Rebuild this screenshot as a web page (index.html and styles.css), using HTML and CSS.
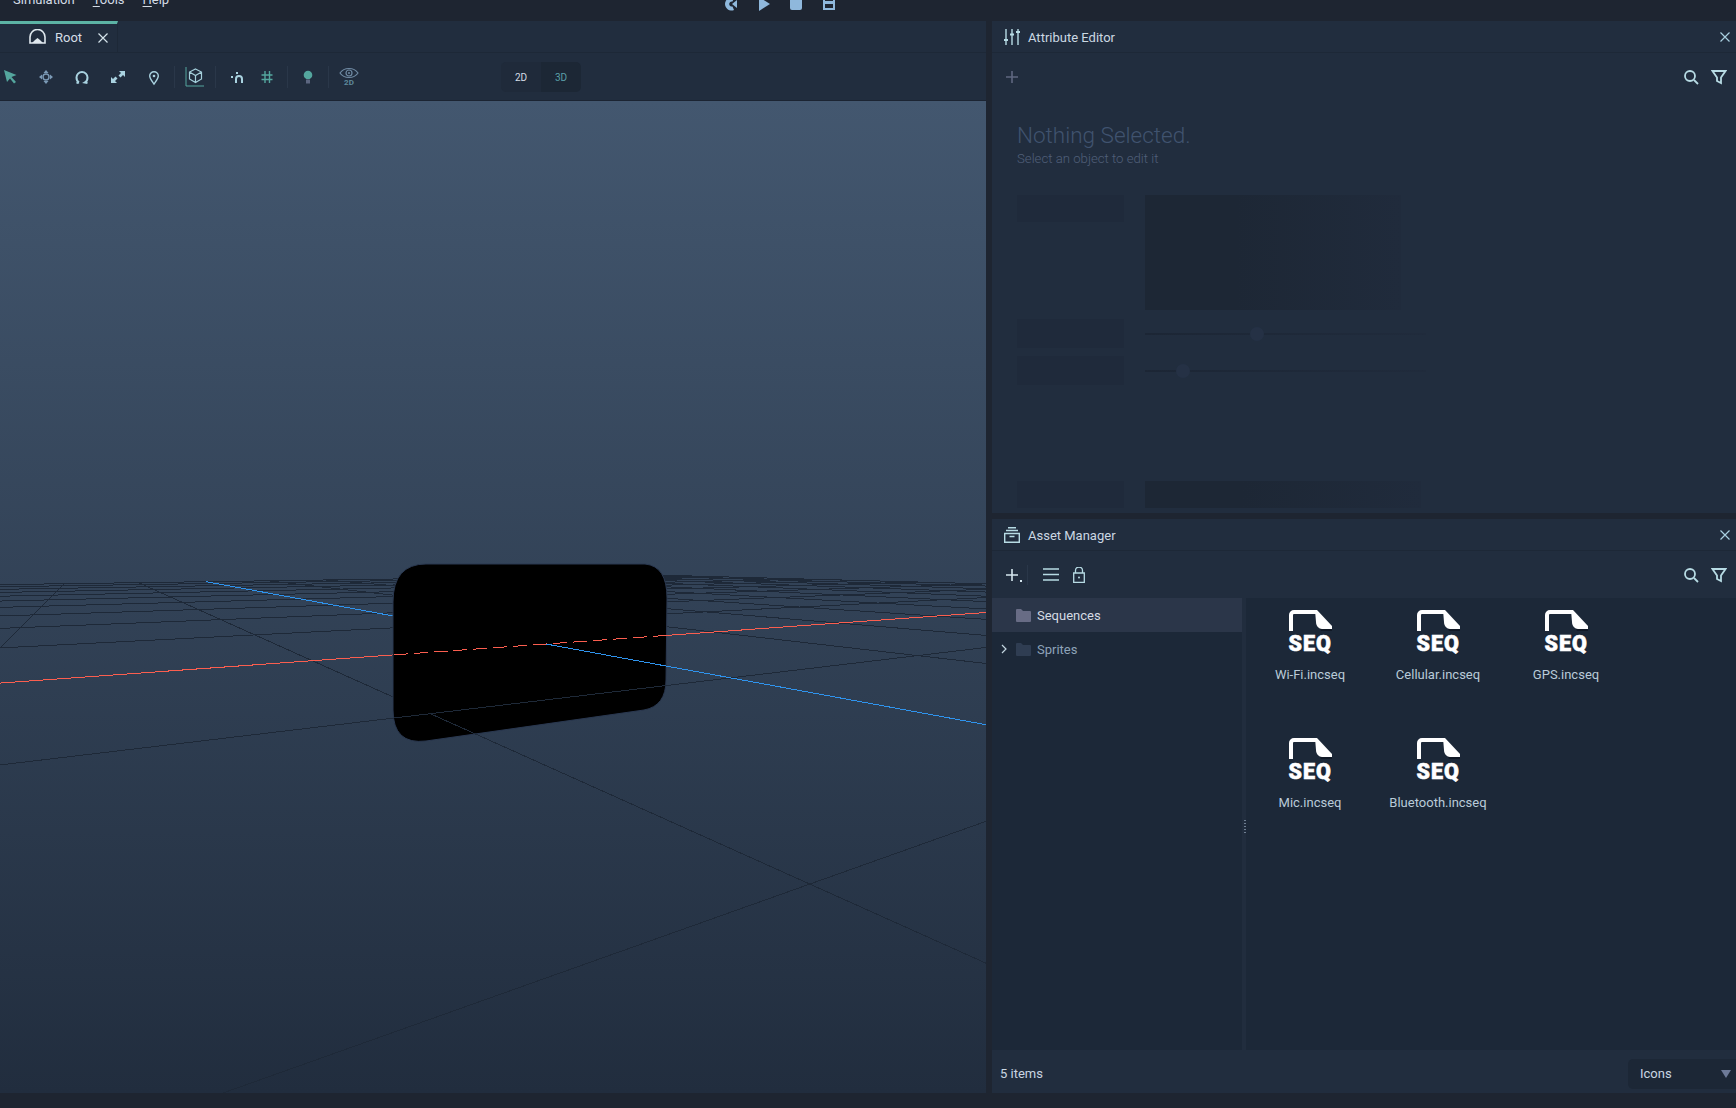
FILE: index.html
```html
<!DOCTYPE html>
<html lang="en">
<head>
    <meta charset="UTF-8">
    <title>Root</title>
    <link rel="stylesheet" href="styles.css">
</head>
<body>

    <!-- Menu bar, cut off by the top of the window -->
    <div class="topbar">
        <div class="menu">
            <span>Simulation</span>
            <span><u>T</u>ools</span>
            <span><u>H</u>elp</span>
        </div>
        <div class="transport">
            <svg class="trans-icon" viewBox="0 0 18 18"><path d="M13 3a6.500 6.500 0 1 0 0 12l-1.500-3.500a2.600 2.600 0 1 1 0-5z"/><path d="M11 9l5-4v8z"/></svg>
            <svg class="trans-icon" viewBox="0 0 18 18"><path d="M5 2l11 7-11 7z"/></svg>
            <svg class="trans-icon" viewBox="0 0 18 18"><rect x="3" y="2" width="12" height="13" rx="2"/></svg>
            <svg class="trans-icon" viewBox="0 0 18 18"><path fill-rule="evenodd" d="M3 0h12v15H3zM5 2v4h8V2zM5 9v4h8V9z"/></svg>
        </div>
    </div>

    <div class="main">

        <!-- 3D view -->
        <div class="left-panel">
            <div class="tabbar">
                <div class="tab">
                    <svg class="tab-icon" viewBox="0 0 17 15"><path class="line" d="M1 14V8a7.500 7.500 0 0 1 15 0v6z"/><path class="solid" d="M3 14l3-3 2.500-2 2.500 2 3 3z"/></svg>
                    <span>Root</span>
                    <svg class="close" viewBox="0 0 12 12"><path d="M1.500 1.500l9 9M10.500 1.500l-9 9"/></svg>
                </div>
            </div>
            <div class="toolbar view-tools">
                <div class="tool-group">
                    <svg class="tool teal" viewBox="0 0 20 20"><path class="solid" d="M4 3l12.500 5-5 2 4.500 5-2 1.500-4-5-3 3.500z"/></svg>
                    <svg class="tool steel" viewBox="0 0 20 20"><circle class="line" cx="10" cy="10" r="3"/><path class="solid" d="M10 3l2.500 3h-5zM10 17l-2.500-3h5zM3 10l3-2.500v5zM17 10l-3 2.500v-5z"/></svg>
                    <svg class="tool pale" viewBox="0 0 20 20"><path class="line thick" d="M7 15.500l-2.500 .5M7 15.500c-1.500-.8-2.500-2.300-2.500-5a5.500 5.500 0 0 1 11 0c0 2.700-1 4.200-2.500 5l2.500 .5"/></svg>
                    <svg class="tool pale" viewBox="0 0 20 20"><path class="solid" d="M11 4h6v6l-2-2-2.500 2.500-2-2L13 6zM9 16H3v-6l2 2 2.500-2.500 2 2L7 14z"/></svg>
                    <svg class="tool pale" viewBox="0 0 20 20"><path class="line" d="M10 17c-2.500-3.500-4.300-5.700-4.300-8a4.300 4.300 0 0 1 8.600 0c0 2.300-1.800 4.500-4.300 8z"/><circle class="solid" cx="10" cy="9" r="1.300"/></svg>
                </div>
                <i class="sep"></i>
                <div class="tool-group">
                    <svg class="tool teal" viewBox="0 0 20 20"><path class="line thin" d="M1 0v19h18"/><path class="line pale-stroke" d="M10.500 2l6 3v7l-6 3.500-6-3.500V5zM4.500 5l6 3.500 6-3.500M10.500 8.500v7"/></svg>
                </div>
                <i class="sep"></i>
                <div class="tool-group tight">
                    <svg class="tool pale" viewBox="0 0 20 20"><path class="line thick" d="M9 16v-4a2.800 2.800 0 0 1 6 0v4"/><path class="solid" d="M4 9h2v2H4zM9 5h2v2H9z"/></svg>
                    <svg class="tool teal" viewBox="0 0 20 20"><path class="line" d="M8 4v12M12.500 4v12M4.500 8h11M4.500 12.500h11"/></svg>
                </div>
                <i class="sep"></i>
                <div class="tool-group">
                    <svg class="tool teal" viewBox="0 0 20 20"><circle class="solid" cx="10" cy="8" r="4.300"/><rect class="base" x="8" y="12.500" width="4" height="4"/></svg>
                </div>
                <i class="sep"></i>
                <div class="tool-group">
                    <div class="eye">
                        <svg viewBox="0 0 20 12"><path class="line" d="M1 6c4-6 14-6 18 0-4 6-14 6-18 0z"/><circle class="line" cx="10" cy="6" r="3"/><circle class="solid" cx="10" cy="6" r="1"/></svg>
                        <b>2D</b>
                    </div>
                </div>
                <div class="dim-toggle">
                    <span class="dim on">2D</span>
                    <span class="dim off">3D</span>
                </div>
            </div>
            <div class="viewport">
                <!-- viewBox keeps the y values the same as on the window -->
                <svg class="scene" viewBox="0 101 986 993">
                    <g id="grid-back" class="grid"></g>
                    <path class="screen-shape" d="M393 602Q393 564 426 564L645 564Q667 566 667 598L666 680Q666 706 644 710L426 741Q393 745 393 710Z"/>
                    <g id="grid-front" class="grid"></g>
                </svg>
            </div>
        </div>

        <div class="right-col">

            <!-- Attribute Editor -->
            <div class="panel attr-panel">
                <div class="panel-head">
                    <svg class="head-icon" viewBox="0 0 16 16"><path d="M2 0v16M8 0v16M14 0v16"/><path class="bar" d="M0 11h4M6 5.500h4M12 3h4"/></svg>
                    <span>Attribute Editor</span>
                    <svg class="close" viewBox="0 0 12 12"><path d="M1.500 1.500l9 9M10.500 1.500l-9 9"/></svg>
                </div>
                <div class="toolbar panel-tools">
                    <svg class="plus dim-plus" viewBox="0 0 14 14"><path d="M7 1v12M1 7h12"/></svg>
                    <div class="tools-right">
                        <svg class="find" viewBox="0 0 16 16"><circle cx="7" cy="7" r="5"/><path d="M11 11l4 4"/></svg>
                        <svg class="find" viewBox="0 0 16 16"><path d="M1.500 2h13L10 8.500V14l-4-2V8.500z"/></svg>
                    </div>
                </div>
                <div class="empty-state">
                    <h2>Nothing Selected.</h2>
                    <p>Select an object to edit it</p>
                    <div class="ghost-row big">
                        <i class="ghost-label"></i>
                        <i class="ghost-box"></i>
                    </div>
                    <div class="ghost-row slider-row">
                        <i class="ghost-label tall"></i>
                        <div class="ghost-slider"><i class="knob knob-a"></i></div>
                    </div>
                    <div class="ghost-row slider-row">
                        <i class="ghost-label tall"></i>
                        <div class="ghost-slider"><i class="knob knob-b"></i></div>
                    </div>
                    <div class="ghost-row last">
                        <i class="ghost-label"></i>
                        <i class="ghost-box"></i>
                    </div>
                </div>
            </div>

            <!-- Asset Manager -->
            <div class="panel asset-panel">
                <div class="panel-head">
                    <svg class="head-icon" viewBox="0 0 16 16"><path d="M4 .7h8M2 3.500h12M.7 6.500h14.600v8.800H.7zM5.500 9.500h5"/></svg>
                    <span>Asset Manager</span>
                    <svg class="close" viewBox="0 0 12 12"><path d="M1.500 1.500l9 9M10.500 1.500l-9 9"/></svg>
                </div>
                <div class="toolbar panel-tools">
                    <svg class="plus" viewBox="0 0 14 14"><path d="M7 1v12M1 7h12"/></svg>
                    <i class="dot"></i>
                    <i class="sep faint"></i>
                    <svg class="burger" viewBox="0 0 16 13"><path d="M0 1h16M0 6.500h16M0 12h16"/></svg>
                    <svg class="lock" viewBox="0 0 12 16"><path d="M2.500 6V3.500a3.500 3.500 0 0 1 7 0V6M.7 6h10.600v9.300H.7z"/><circle cx="6" cy="10.500" r="1"/></svg>
                    <div class="tools-right">
                        <svg class="find" viewBox="0 0 16 16"><circle cx="7" cy="7" r="5"/><path d="M11 11l4 4"/></svg>
                        <svg class="find" viewBox="0 0 16 16"><path d="M1.500 2h13L10 8.500V14l-4-2V8.500z"/></svg>
                    </div>
                </div>
                <div class="asset-body">
                    <div class="tree">
                        <div class="tree-row selected">
                            <svg class="folder" viewBox="0 0 15 13"><path d="M0 1q0-1 1-1h4l2 2h7q1 0 1 1v9q0 1-1 1H1q-1 0-1-1z"/></svg>
                            <span>Sequences</span>
                        </div>
                        <div class="tree-row">
                            <svg class="chevron" viewBox="0 0 6 10"><path d="M1 1l4 4-4 4"/></svg>
                            <svg class="folder" viewBox="0 0 15 13"><path d="M0 1q0-1 1-1h4l2 2h7q1 0 1 1v9q0 1-1 1H1q-1 0-1-1z"/></svg>
                            <span>Sprites</span>
                        </div>
                    </div>
                    <div class="splitter"><i class="grip"></i></div>
                    <div class="files">
                        <div class="file">
                            <div class="seq-icon">
                                <svg viewBox="0 0 43 21"><path class="shadow" d="M28 13l15 5v3H32z"/><path class="sheet" d="M2 21V5a3 3 0 0 1 3-3h23"/><path class="fold" d="M26 0h2l15 16v3H33c-3 0-6-3-6-7z"/></svg>
                                <b>SEQ</b>
                            </div>
                            <span>Wi-Fi.incseq</span>
                        </div>
                        <div class="file">
                            <div class="seq-icon">
                                <svg viewBox="0 0 43 21"><path class="shadow" d="M28 13l15 5v3H32z"/><path class="sheet" d="M2 21V5a3 3 0 0 1 3-3h23"/><path class="fold" d="M26 0h2l15 16v3H33c-3 0-6-3-6-7z"/></svg>
                                <b>SEQ</b>
                            </div>
                            <span>Cellular.incseq</span>
                        </div>
                        <div class="file">
                            <div class="seq-icon">
                                <svg viewBox="0 0 43 21"><path class="shadow" d="M28 13l15 5v3H32z"/><path class="sheet" d="M2 21V5a3 3 0 0 1 3-3h23"/><path class="fold" d="M26 0h2l15 16v3H33c-3 0-6-3-6-7z"/></svg>
                                <b>SEQ</b>
                            </div>
                            <span>GPS.incseq</span>
                        </div>
                        <div class="file">
                            <div class="seq-icon">
                                <svg viewBox="0 0 43 21"><path class="shadow" d="M28 13l15 5v3H32z"/><path class="sheet" d="M2 21V5a3 3 0 0 1 3-3h23"/><path class="fold" d="M26 0h2l15 16v3H33c-3 0-6-3-6-7z"/></svg>
                                <b>SEQ</b>
                            </div>
                            <span>Mic.incseq</span>
                        </div>
                        <div class="file">
                            <div class="seq-icon">
                                <svg viewBox="0 0 43 21"><path class="shadow" d="M28 13l15 5v3H32z"/><path class="sheet" d="M2 21V5a3 3 0 0 1 3-3h23"/><path class="fold" d="M26 0h2l15 16v3H33c-3 0-6-3-6-7z"/></svg>
                                <b>SEQ</b>
                            </div>
                            <span>Bluetooth.incseq</span>
                        </div>
                    </div>
                </div>
                <div class="asset-foot">
                    <span>5 items</span>
                    <div class="view-select">
                        <span>Icons</span>
                        <i class="caret"></i>
                    </div>
                </div>
            </div>
        </div>
    </div>

    <script src="grid.js"></script>
</body>
</html>
```

FILE: styles.css
```css
* {
    box-sizing: border-box;
}
html, body {
    height: 100%;
}
body {
    margin: 0;
    overflow: hidden;
    background-color: #1e2531;
    color: #c9d6e2;
    font-family: Roboto, "Liberation Sans", sans-serif;
    font-size: 13px;
}
svg {
    display: block;
    flex: none;
}
i {
    display: block;
}

/* Top bar */
.topbar {
    height: 21px;
    display: flex;
    overflow: hidden;
}
.menu {
    display: flex;
    gap: 18px;
    padding-left: 13px;
    margin-top: -9px;
    width: 721px;
    line-height: 18px;
    color: #d3dbe5;
}
.menu u {
    text-underline-offset: 2px;
}
.transport {
    display: flex;
    gap: 15px;
    margin-top: -5px;
}
.trans-icon {
    width: 18px;
    height: 18px;
    fill: #8fb8dc;
}

/* Layout */
.main {
    height: 1072px;
    display: flex;
    gap: 6px;
}
.left-panel {
    width: 986px;
    display: flex;
    flex-direction: column;
    background-color: #212d3e;
}
.right-col {
    flex: 1;
    display: flex;
    flex-direction: column;
    gap: 6px;
}
.panel {
    display: flex;
    flex-direction: column;
    background-color: #212d3e;
    overflow: hidden;
}
.attr-panel {
    height: 492px;
}
.asset-panel {
    flex: 1;
}

/* Tabs */
.tabbar {
    height: 32px;
    flex: none;
    border-bottom: 1px solid #1d2837;
}
.tab {
    width: 118px;
    height: 31px;
    display: flex;
    align-items: center;
    padding-left: 29px;
    border-top: 3px solid #5cb3a5;
    border-right: 1px solid #1d2837;
    color: #d5dde6;
}
.tab-icon {
    width: 17px;
    height: 15px;
    margin-right: 9px;
    margin-top: -3px;
}
.tab-icon .line {
    fill: none;
    stroke: #dfe8ee;
    stroke-width: 1.600;
}
.tab-icon .solid {
    fill: #dfe8ee;
}
.tab span {
    margin-top: -1px;
}
.close {
    width: 12px;
    height: 12px;
    fill: none;
    stroke: #a9cfe0;
    stroke-width: 1.2;
}
.tab .close {
    margin-left: 15px;
    stroke: #d5e2ea;
}

/* Toolbars */
.toolbar {
    height: 47px;
    display: flex;
    align-items: center;
    flex: none;
}
.view-tools {
    height: 48px;
    padding-top: 1px;
    border-bottom: 1px solid #1b2432;
}
.tool-group {
    display: flex;
    gap: 16px;
}
.tool-group.tight {
    gap: 10px;
    margin-left: 1px;
}
.tool {
    width: 20px;
    height: 20px;
}
.tool .line {
    fill: none;
    stroke: currentColor;
    stroke-width: 1.4;
}
.tool .thick {
    stroke-width: 2;
}
.tool .thin {
    stroke-width: 1;
}
.tool .pale-stroke {
    stroke: #a5d0dc;
    stroke-width: 1.2;
}
.tool .solid {
    fill: currentColor;
}
.tool .base {
    fill: #5c6680;
}
.teal {
    color: #54a69e;
}
.steel {
    color: #7b9ab6;
}
.pale {
    color: #a9d2e0;
}
.sep {
    width: 1px;
    height: 22px;
    margin: 0 10px;
    background-color: #2a3749;
}
.sep.faint {
    height: 20px;
    margin: 0 15px 0 5px;
}
.eye {
    width: 20px;
    color: #6f8aa3;
}
.eye svg {
    width: 20px;
    height: 12px;
}
.eye .line {
    fill: none;
    stroke: currentColor;
    stroke-width: 1.2;
}
.eye .solid {
    fill: currentColor;
}
.eye b {
    display: block;
    text-align: center;
    font-size: 8px;
    line-height: 8px;
    color: #5f8a9c;
}
.dim-toggle {
    display: flex;
    margin-left: 142px;
    height: 30px;
    border-radius: 5px;
    overflow: hidden;
    font-size: 10px;
}
.dim {
    width: 40px;
    display: flex;
    align-items: center;
    justify-content: center;
}
.dim.on {
    background-color: #1f2a3a;
    color: #d5dde6;
}
.dim.off {
    background-color: #1c2735;
    color: #5a9fa8;
}

/* 3D view */
.viewport {
    flex: 1;
    background: linear-gradient(#43576f, #212d3e);
    overflow: hidden;
}
.scene {
    width: 986px;
    height: 993px;
}
.grid line {
    stroke: #1e2938;
    stroke-width: 1;
    shape-rendering: crispEdges;
}
.grid line.axis-x {
    stroke: #fb5e4f;
}
.grid line.axis-z {
    stroke: #2f94ee;
}
.grid line.dashed {
    stroke-dasharray: 14 6;
}
.screen-shape {
    fill: #000;
    stroke: #2a3850;
    stroke-width: 1;
}

/* Panels */
.panel-head {
    height: 32px;
    flex: none;
    display: flex;
    align-items: center;
    padding: 1px 5px 0 12px;
    border-bottom: 1px solid #1d2837;
    color: #cbd8e3;
}
.head-icon {
    width: 16px;
    height: 16px;
    margin-right: 8px;
    fill: none;
    stroke: #b7dbe4;
    stroke-width: 1.400;
}
.head-icon .bar {
    stroke-width: 2.200;
}
.panel-head .close {
    margin-left: auto;
}
.panel-tools {
    padding: 0 9px 0 13px;
}
.plus {
    width: 14px;
    height: 14px;
    fill: none;
    stroke: #d5e6ee;
    stroke-width: 1.600;
}
.dim-plus {
    stroke: #5f6780;
}
.dot {
    width: 2px;
    height: 2px;
    margin: 12px 0 0 1px;
    background-color: #d5e6ee;
}
.burger {
    width: 16px;
    height: 13px;
    fill: none;
    stroke: #b7dbe4;
    stroke-width: 1.400;
}
.lock {
    width: 12px;
    height: 16px;
    margin-left: 14px;
    fill: none;
    stroke: #b7dbe4;
    stroke-width: 1.300;
}
.lock circle {
    fill: #b7dbe4;
    stroke: none;
}
.tools-right {
    margin-left: auto;
    display: flex;
    gap: 12px;
}
.find {
    width: 16px;
    height: 16px;
    fill: none;
    stroke: #b7dbe4;
    stroke-width: 1.800;
}

/* Attribute Editor, empty state */
.empty-state {
    padding: 22px 0 0 25px;
}
.empty-state h2 {
    margin: 0 0 3px;
    font-size: 22.500px;
    font-weight: 300;
    line-height: 26px;
    color: #40536f;
}
.empty-state p {
    margin: 0;
    font-size: 13.200px;
    font-weight: 300;
    line-height: 16px;
    color: #505f79;
}
.ghost-row {
    display: flex;
    gap: 21px;
}
.ghost-label {
    width: 107px;
    height: 27px;
    flex: none;
    background-color: #1f2a3b;
}
.ghost-label.tall {
    height: 29px;
}
.ghost-box {
    width: 256px;
    background: linear-gradient(90deg, #1d2735 35%, #202b3c);
}
.ghost-row.big {
    margin-top: 28px;
    height: 115px;
}
.ghost-row.slider-row {
    margin-top: 9px;
    height: 29px;
    align-items: center;
}
.ghost-row.slider-row + .slider-row {
    margin-top: 8px;
}
.ghost-row.last {
    margin-top: 96px;
    height: 27px;
}
.ghost-row.last .ghost-box {
    width: 276px;
}
.ghost-slider {
    position: relative;
    width: 281px;
    height: 2px;
    background: linear-gradient(90deg, #1c2635, #202b3c);
}
.knob {
    position: absolute;
    top: -6px;
    width: 14px;
    height: 14px;
    border-radius: 50%;
    background-color: #253145;
}
.knob-a {
    left: 105px;
}
.knob-b {
    left: 31px;
}

/* Asset Manager */
.asset-body {
    flex: 1;
    display: flex;
    min-height: 0;
}
.tree {
    width: 250px;
    background-color: #1c2838;
    color: #8ea3b8;
}
.tree-row {
    height: 34px;
    display: flex;
    align-items: center;
    padding-left: 24px;
    position: relative;
}
.tree-row.selected {
    background-color: #2b3649;
    color: #d5dbe3;
}
.folder {
    width: 15px;
    height: 13px;
    margin-right: 6px;
    fill: #2f3d52;
}
.selected .folder {
    fill: #686c85;
}
.chevron {
    position: absolute;
    left: 9px;
    top: 12px;
    width: 6px;
    height: 10px;
    fill: none;
    stroke: #c3d6e0;
    stroke-width: 1.200;
}
.splitter {
    width: 4px;
    position: relative;
    background-color: #212d3e;
}
.grip {
    position: absolute;
    right: 0;
    top: 222px;
    width: 2px;
    height: 15px;
    background: repeating-linear-gradient(#6f7f92 0 1px, transparent 1px 3px);
}
.files {
    flex: 1;
    display: grid;
    grid-template-columns: repeat(auto-fill, 128px);
    grid-auto-rows: 128px;
    align-content: start;
    background-color: #1c2838;
}
.file {
    display: flex;
    flex-direction: column;
    align-items: center;
    padding-top: 12px;
    color: #b9cbd9;
}
.seq-icon {
    width: 43px;
    height: 44px;
    margin-bottom: 13px;
}
.seq-icon svg {
    width: 43px;
    height: 21px;
}
.seq-icon b {
    display: block;
    margin-top: 2px;
    text-align: center;
    font-size: 21.500px;
    font-weight: 900;
    line-height: 21px;
    letter-spacing: 1px;
    white-space: nowrap;
    color: #fff;
    -webkit-text-stroke: 0.6px #fff;
}
.seq-icon .sheet {
    fill: none;
    stroke: #fff;
    stroke-width: 4;
}
.seq-icon .fold {
    fill: #fff;
}
.seq-icon .shadow {
    fill: #111926;
}
.asset-foot {
    height: 43px;
    flex: none;
    display: flex;
    align-items: center;
    justify-content: space-between;
    padding: 4px 0 0 8px;
    color: #c9d6e2;
}
.view-select {
    width: 108px;
    height: 30px;
    display: flex;
    align-items: center;
    justify-content: space-between;
    padding: 0 5px 0 12px;
    border-radius: 5px 0 0 5px;
    background-color: #1c2736;
}
.caret {
    width: 0;
    height: 0;
    border-left: 5px solid transparent;
    border-right: 5px solid transparent;
    border-top: 8px solid #6d7a98;
}
```

FILE: grid.js
```js
// Ground grid of the 3D view, projected from two vanishing points
var origin = { x: 546, y: 644 };
var vanishX = { x: 1720, y: 560 };
var vanishZ = { x: 88, y: 560 };
var stepX = 0.166;
var stepZ = 0.2874;
var gridSize = 10;
var nearLimit = 0.02;

function project(u, v) {
    var a = u * stepX;
    var b = v * stepZ;
    var d = 1 + a + b;
    return {
        x: (origin.x + a * vanishX.x + b * vanishZ.x) / d,
        y: (origin.y + a * vanishX.y + b * vanishZ.y) / d
    };
}

function depth(p) {
    return 1 + p[0] * stepX + p[1] * stepZ;
}

// Adds a line from grid point a to grid point b, cut where it passes the camera
function addLine(group, a, b, className) {
    var da = depth(a);
    var db = depth(b);
    if (da < nearLimit && db < nearLimit) return;
    if (db < nearLimit) {
        var t = (da - nearLimit) / (da - db);
        b = [a[0] + (b[0] - a[0]) * t, a[1] + (b[1] - a[1]) * t];
    }
    var from = project(a[0], a[1]);
    var to = project(b[0], b[1]);
    var line = document.createElementNS("http://www.w3.org/2000/svg", "line");
    line.setAttribute("x1", from.x);
    line.setAttribute("y1", from.y);
    line.setAttribute("x2", to.x);
    line.setAttribute("y2", to.y);
    if (className) line.setAttribute("class", className);
    group.appendChild(line);
}

var back = document.getElementById("grid-back");
var front = document.getElementById("grid-front");

for (var i = -gridSize; i <= gridSize; i++) {
    if (i !== 0) {
        addLine(back, [gridSize, i], [-gridSize, i]);
        addLine(back, [i, gridSize], [i, -gridSize]);
    }
    // lines nearer than the black screen are drawn over it
    if (i < 0) {
        addLine(front, [gridSize, i], [-gridSize, i]);
        addLine(front, [i, -1], [i, -gridSize]);
    }
}

addLine(back, [gridSize, 0], [-gridSize, 0], "axis-x");
addLine(back, [0, gridSize], [0, -gridSize], "axis-z");
addLine(front, [0, 0], [0, -gridSize], "axis-z");

// red axis shows dashed where it crosses the screen
addLine(front, [0.692, 0], [-0.695, 0], "axis-x dashed");
```
